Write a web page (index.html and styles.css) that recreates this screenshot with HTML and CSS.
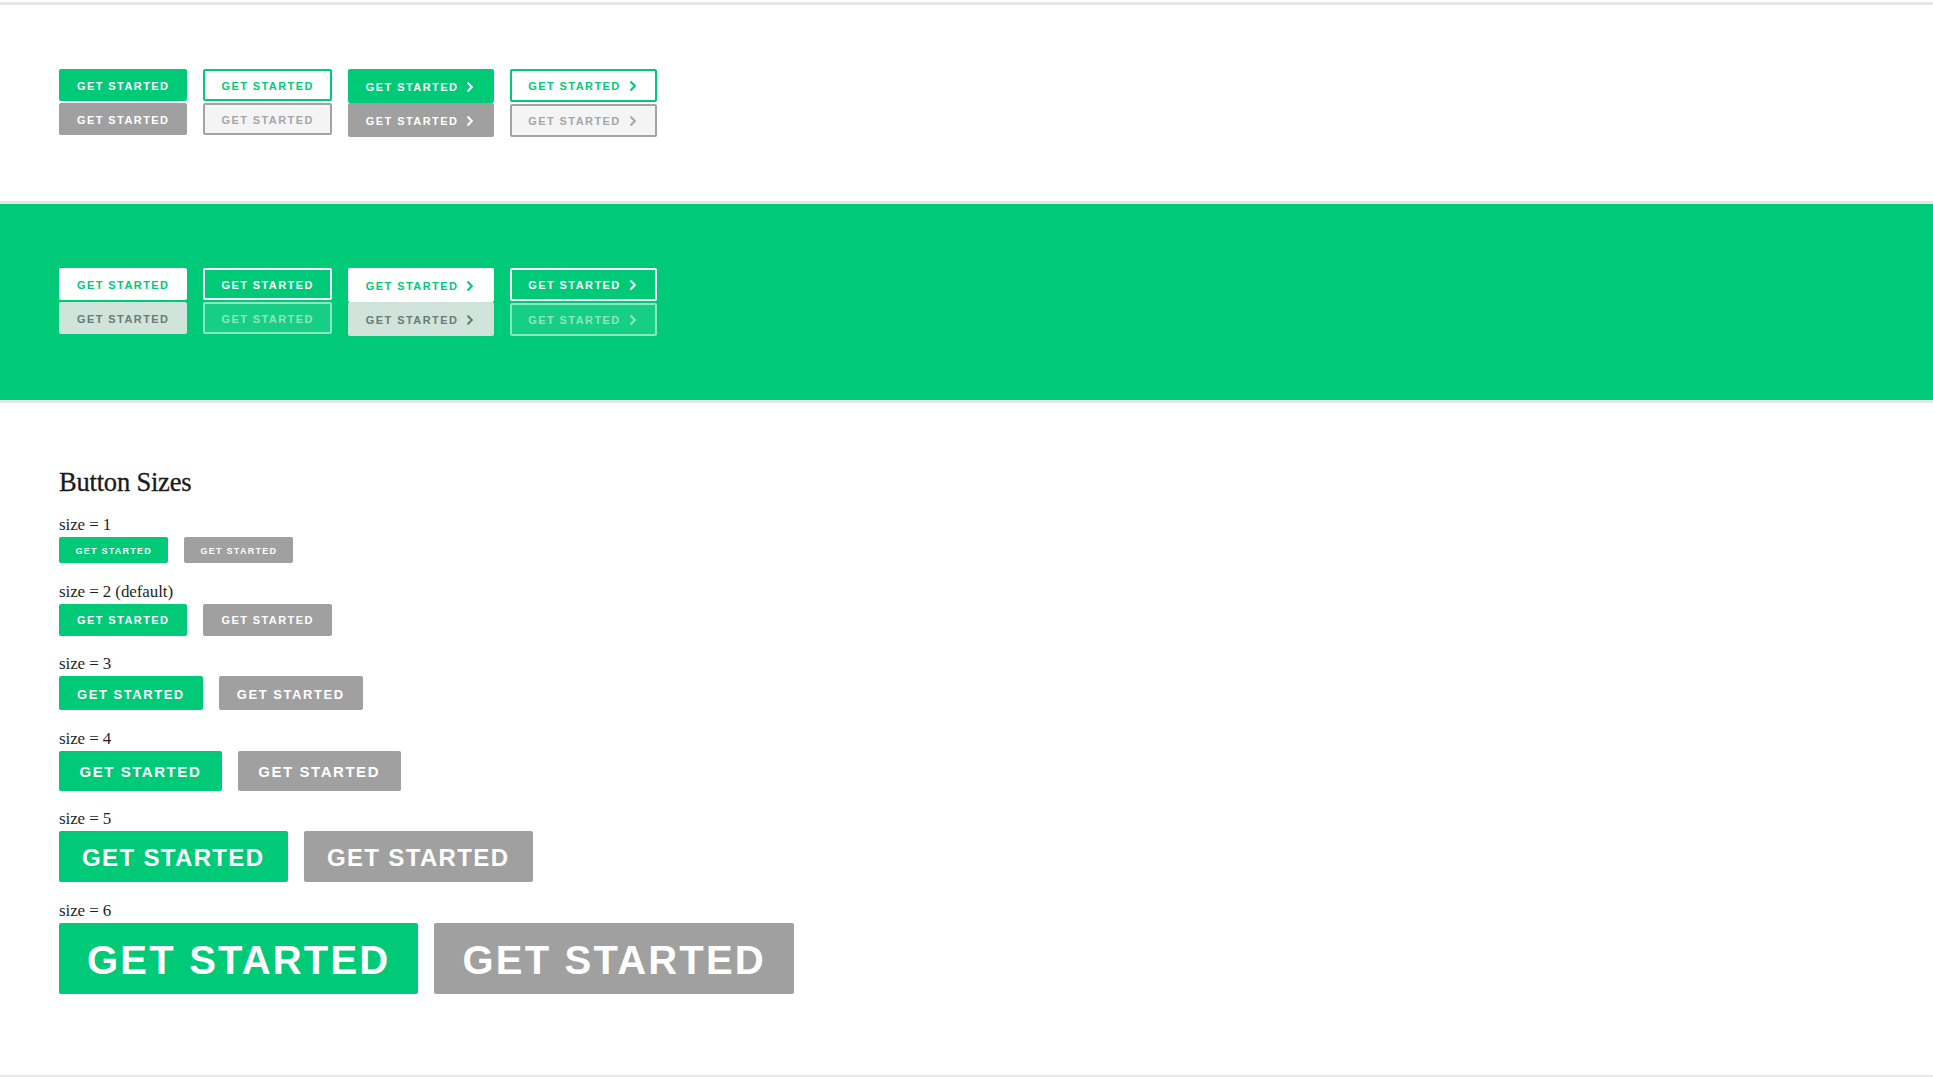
FILE: index.html
```html
<!DOCTYPE html>
<html lang="en">
<head>
<meta charset="utf-8">
<title>Buttons</title>
<link rel="stylesheet" href="styles.css">
</head>
<body>
<main class="page">
  <section class="demo demo-light">
    <div class="btn-grid">
      <div class="btn-col">
        <a href="#" class="btn btn-fill">GET STARTED</a>
        <a href="#" class="btn btn-fill is-disabled">GET STARTED</a>
      </div>
      <div class="btn-col">
        <a href="#" class="btn btn-outline">GET STARTED</a>
        <a href="#" class="btn btn-outline is-disabled">GET STARTED</a>
      </div>
      <div class="btn-col btn-col-arrow">
        <a href="#" class="btn btn-fill btn-arrow">GET STARTED<svg class="chev" viewBox="0 0 6 10" width="6" height="10"><path d="M1.2 1.2 L4.8 5 L1.2 8.8" /></svg></a>
        <a href="#" class="btn btn-fill btn-arrow is-disabled">GET STARTED<svg class="chev" viewBox="0 0 6 10" width="6" height="10"><path d="M1.2 1.2 L4.8 5 L1.2 8.8" /></svg></a>
      </div>
      <div class="btn-col btn-col-arrow-outline">
        <a href="#" class="btn btn-outline btn-arrow">GET STARTED<svg class="chev" viewBox="0 0 6 10" width="6" height="10"><path d="M1.2 1.2 L4.8 5 L1.2 8.8" /></svg></a>
        <a href="#" class="btn btn-outline btn-arrow is-disabled">GET STARTED<svg class="chev" viewBox="0 0 6 10" width="6" height="10"><path d="M1.2 1.2 L4.8 5 L1.2 8.8" /></svg></a>
      </div>
    </div>
  </section>

  <section class="demo demo-green">
    <div class="btn-grid">
      <div class="btn-col">
        <a href="#" class="btn btn-fill">GET STARTED</a>
        <a href="#" class="btn btn-fill is-disabled">GET STARTED</a>
      </div>
      <div class="btn-col">
        <a href="#" class="btn btn-outline">GET STARTED</a>
        <a href="#" class="btn btn-outline is-disabled">GET STARTED</a>
      </div>
      <div class="btn-col btn-col-arrow">
        <a href="#" class="btn btn-fill btn-arrow">GET STARTED<svg class="chev" viewBox="0 0 6 10" width="6" height="10"><path d="M1.2 1.2 L4.8 5 L1.2 8.8" /></svg></a>
        <a href="#" class="btn btn-fill btn-arrow is-disabled">GET STARTED<svg class="chev" viewBox="0 0 6 10" width="6" height="10"><path d="M1.2 1.2 L4.8 5 L1.2 8.8" /></svg></a>
      </div>
      <div class="btn-col btn-col-arrow-outline">
        <a href="#" class="btn btn-outline btn-arrow">GET STARTED<svg class="chev" viewBox="0 0 6 10" width="6" height="10"><path d="M1.2 1.2 L4.8 5 L1.2 8.8" /></svg></a>
        <a href="#" class="btn btn-outline btn-arrow is-disabled">GET STARTED<svg class="chev" viewBox="0 0 6 10" width="6" height="10"><path d="M1.2 1.2 L4.8 5 L1.2 8.8" /></svg></a>
      </div>
    </div>
  </section>

  <section class="demo demo-sizes">
    <h2 class="sizes-title">Button Sizes</h2>

    <div class="size-group">
      <div class="size-label">size = 1</div>
      <div class="size-row">
        <a href="#" class="btn btn-fill btn-s1">GET STARTED</a>
        <a href="#" class="btn btn-fill is-disabled btn-s1">GET STARTED</a>
      </div>
    </div>

    <div class="size-group">
      <div class="size-label">size = 2 (default)</div>
      <div class="size-row">
        <a href="#" class="btn btn-fill">GET STARTED</a>
        <a href="#" class="btn btn-fill is-disabled">GET STARTED</a>
      </div>
    </div>

    <div class="size-group">
      <div class="size-label">size = 3</div>
      <div class="size-row">
        <a href="#" class="btn btn-fill btn-s3">GET STARTED</a>
        <a href="#" class="btn btn-fill is-disabled btn-s3">GET STARTED</a>
      </div>
    </div>

    <div class="size-group">
      <div class="size-label">size = 4</div>
      <div class="size-row">
        <a href="#" class="btn btn-fill btn-s4">GET STARTED</a>
        <a href="#" class="btn btn-fill is-disabled btn-s4">GET STARTED</a>
      </div>
    </div>

    <div class="size-group">
      <div class="size-label">size = 5</div>
      <div class="size-row">
        <a href="#" class="btn btn-fill btn-s5">GET STARTED</a>
        <a href="#" class="btn btn-fill is-disabled btn-s5">GET STARTED</a>
      </div>
    </div>

    <div class="size-group">
      <div class="size-label">size = 6</div>
      <div class="size-row">
        <a href="#" class="btn btn-fill btn-s6">GET STARTED</a>
        <a href="#" class="btn btn-fill is-disabled btn-s6">GET STARTED</a>
      </div>
    </div>
  </section>
  <div class="page-end"></div>
</main>
</body>
</html>
```

FILE: styles.css
```css
* { box-sizing: border-box; }

html, body {
  margin: 0;
  padding: 0;
  background: #ffffff;
}

body {
  font-family: "Liberation Serif", "Times New Roman", serif;
  color: #1f1f1f;
}

.page {
  padding-top: 2px;
}

.demo {
  border-top: 3px solid #e6e6e6;
  padding: 64px 59px;
}

.demo-green {
  background: #00c978;
}

.demo-sizes {
  padding-bottom: 81px;
}

.page-end {
  border-top: 3px solid #e6e6e6;
}

.btn-grid {
  display: flex;
  gap: 16px;
  align-items: flex-start;
}

.btn-col {
  display: flex;
  flex-direction: column;
  align-items: stretch;
  gap: 2px;
}

.btn-col-arrow { gap: 0; }
.btn-col-arrow-outline { gap: 2px; }

/* base button */
.btn {
  display: inline-flex;
  align-items: center;
  justify-content: flex-start;
  height: 32px;
  padding: 2px 18px 0;
  font-family: "Liberation Sans", Arial, sans-serif;
  font-weight: 700;
  font-size: 11px;
  line-height: 1;
  letter-spacing: 1.42px;
  text-decoration: none;
  white-space: nowrap;
  border-radius: 2px;
  border: 0 solid transparent;
}

.btn-outline {
  border-width: 2px;
  padding: 2px 16px 0;
}

.btn-arrow {
  height: 34px;
  padding: 2px 21px 0 18px;
}

.btn-outline.btn-arrow {
  height: 33px;
  padding: 2px 19px 0 16px;
}

.chev {
  margin-left: 9px;
  margin-top: -1px;
  flex: none;
}

.chev path {
  fill: none;
  stroke: currentColor;
  stroke-width: 2;
  stroke-linecap: square;
  stroke-linejoin: miter;
}

/* light surface */
.demo-light .btn-fill,
.demo-sizes .btn-fill {
  background: #00c978;
  color: #ffffff;
}

.demo-light .btn-fill.is-disabled,
.demo-sizes .btn-fill.is-disabled {
  background: #a0a0a0;
  color: #ffffff;
}

.demo-light .btn-outline {
  background: #ffffff;
  border-color: #00c978;
  color: #00c978;
}

.demo-light .btn-outline.is-disabled {
  background: #f4f4f4;
  border-color: #a3a3a3;
  color: #a6a6a6;
}

/* green surface */
.demo-green .btn-fill {
  background: #ffffff;
  color: #00c978;
}

.demo-green .btn-fill.is-disabled {
  background: #d0e4dc;
  color: #6b7a73;
}

.demo-green .btn-outline {
  background: #00c978;
  border-color: #ffffff;
  color: #ffffff;
}

.demo-green .btn-outline.is-disabled {
  background: #16cf84;
  border-color: rgba(255, 255, 255, 0.5);
  color: rgba(255, 255, 255, 0.5);
}

/* sizes section */
.sizes-title {
  margin: 0 0 18px;
  font-family: "Liberation Serif", "Times New Roman", serif;
  font-weight: 400;
  font-size: 26.5px;
  line-height: 30px;
  letter-spacing: -0.2px;
  color: #1a1a1a;
  -webkit-text-stroke: 0.3px #1a1a1a;
}

.size-group + .size-group {
  margin-top: 18.5px;
}

.size-label {
  font-size: 17px;
  line-height: 20px;
  margin-bottom: 2px;
  color: #1f1f1f;
  letter-spacing: -0.1px;
}

.size-row {
  display: flex;
  gap: 16px;
  align-items: flex-start;
}

.btn-s1 {
  height: 26px;
  padding: 2px 16px 0 16.5px;
  font-size: 9px;
  letter-spacing: 1.25px;
}

.btn-s3 {
  height: 34px;
  padding: 2px 18px 0 18px;
  font-size: 13px;
  letter-spacing: 1.55px;
}

.btn-s4 {
  height: 40px;
  padding: 2px 20.5px 0 20.5px;
  font-size: 15px;
  letter-spacing: 1.55px;
}

.btn-s5 {
  height: 51px;
  padding: 3px 23.5px 0 23px;
  font-size: 24px;
  letter-spacing: 1.35px;
}

.btn-s6 {
  height: 71px;
  padding: 4px 28px 0 28px;
  font-size: 40px;
  letter-spacing: 2.2px;
}
```
